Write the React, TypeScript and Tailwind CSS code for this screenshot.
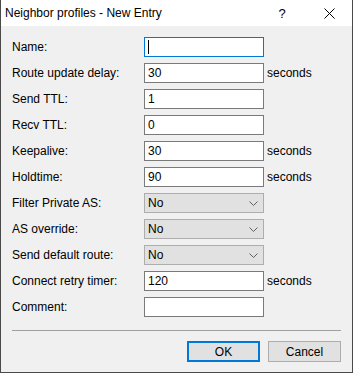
type Row = {
  label: string;
  kind: 'text' | 'select';
  value: string;
  unit?: string;
  focused?: boolean;
};

const rows: Row[] = [
  { label: 'Name:', kind: 'text', value: '', focused: true },
  { label: 'Route update delay:', kind: 'text', value: '30', unit: 'seconds' },
  { label: 'Send TTL:', kind: 'text', value: '1' },
  { label: 'Recv TTL:', kind: 'text', value: '0' },
  { label: 'Keepalive:', kind: 'text', value: '30', unit: 'seconds' },
  { label: 'Holdtime:', kind: 'text', value: '90', unit: 'seconds' },
  { label: 'Filter Private AS:', kind: 'select', value: 'No' },
  { label: 'AS override:', kind: 'select', value: 'No' },
  { label: 'Send default route:', kind: 'select', value: 'No' },
  { label: 'Connect retry timer:', kind: 'text', value: '120', unit: 'seconds' },
  { label: 'Comment:', kind: 'text', value: '' },
];

function Field({ row }: { row: Row }) {
  if (row.kind === 'select') {
    return (
      <div className="w-[120px] h-[20px] flex items-center justify-between bg-[#e1e1e1] border border-[#adadad] pl-[3px] pr-[4px]">
        <span>{row.value}</span>
        <svg width="9" height="5" viewBox="0 0 9 5" className="mr-[1px]">
          <path d="M0.5 0.5 L4.5 4.5 L8.5 0.5" fill="none" stroke="#606060" strokeWidth="1" />
        </svg>
      </div>
    );
  }
  return (
    <div
      className={
        row.focused
          ? 'w-[120px] h-[20px] flex items-center bg-white border border-[#0078d7] pl-[3px]'
          : 'w-[120px] h-[20px] flex items-center bg-white border border-[#7a7a7a] pl-[3px]'
      }
    >
      {row.focused ? <span className="w-px h-[14px] bg-black" /> : <span>{row.value}</span>}
    </div>
  );
}

export default function App() {
  return (
    <div
      className="w-[353px] h-[373px] flex flex-col bg-[#f0f0f0] border-x border-b border-[#4a4a4a] text-[12px] text-black leading-none"
      style={{ fontFamily: '"Segoe UI", "Liberation Sans", Arial, sans-serif' }}
    >
      {/* title bar */}
      <div className="h-[26px] bg-white flex items-center pl-[4px]">
        <span className="flex-1 text-[12px]">Neighbor profiles - New Entry</span>
        <span className="w-[46px] text-center text-[13px] mr-[1px]">?</span>
        <span className="w-[46px] flex justify-center">
          <svg width="11" height="11" viewBox="0 0 11 11">
            <path d="M0.5 0.5 L10.5 10.5 M10.5 0.5 L0.5 10.5" fill="none" stroke="#000" strokeWidth="1" />
          </svg>
        </span>
      </div>

      {/* form */}
      <div className="flex flex-col gap-[6px] pt-[11px] pl-[11px]">
        {rows.map((row) => (
          <div key={row.label} className="flex items-center h-[20px]">
            <span className="w-[132px]">{row.label}</span>
            <Field row={row} />
            {row.unit && <span className="ml-[3px]">{row.unit}</span>}
          </div>
        ))}
      </div>

      {/* separator */}
      <div className="mt-[13px] mx-[11px] h-px bg-[#a0a0a0]" />

      {/* buttons */}
      <div className="flex justify-end gap-[8px] mt-[10px] pr-[11px]">
        <button className="w-[73px] h-[21px] bg-[#e1e1e1] border-2 border-[#0078d7] text-[12px]">
          OK
        </button>
        <button className="w-[73px] h-[21px] bg-[#e1e1e1] border border-[#adadad] text-[12px]">
          Cancel
        </button>
      </div>
    </div>
  );
}
